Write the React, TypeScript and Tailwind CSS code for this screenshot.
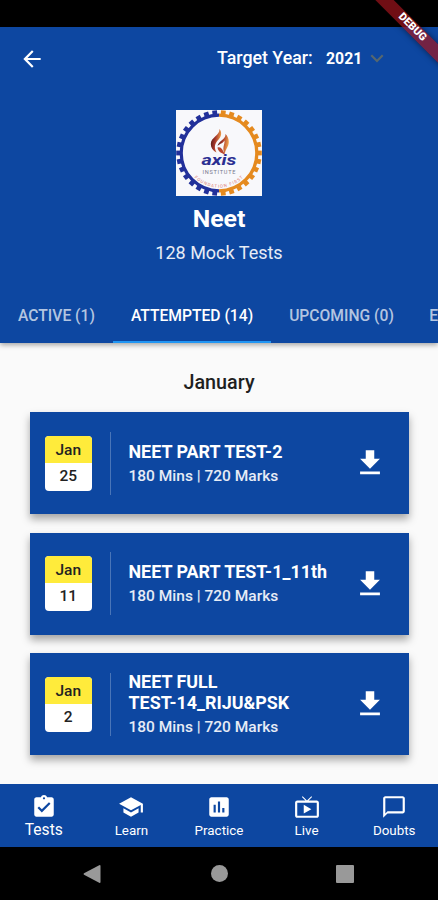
import clsx from "clsx";

interface MockTest {
  month: string;
  day: string;
  title: string[];
  mins: number;
  marks: number;
}

const tests: MockTest[] = [
  { month: "Jan", day: "25", title: ["NEET PART TEST-2"], mins: 180, marks: 720 },
  { month: "Jan", day: "11", title: ["NEET PART TEST-1_11th"], mins: 180, marks: 720 },
  { month: "Jan", day: "2", title: ["NEET FULL", "TEST-14_RIJU&PSK"], mins: 180, marks: 720 },
];

const tabs = [
  { label: "ACTIVE (1)", width: "w-[113px]", active: false },
  { label: "ATTEMPTED (14)", width: "w-[158px]", active: true },
  { label: "UPCOMING (0)", width: "w-[141px]", active: false },
  { label: "EXPIRED (0)", width: "w-[120px]", active: false },
];

const navItems = [
  {
    label: "Tests",
    active: true,
    d: "M19 3h-4.18C14.4 1.84 13.3 1 12 1c-1.3 0-2.4.84-2.82 2H5c-1.1 0-2 .9-2 2v14c0 1.1.9 2 2 2h14c1.1 0 2-.9 2-2V5c0-1.1-.9-2-2-2zm-7 0c.55 0 1 .45 1 1s-.45 1-1 1-1-.45-1-1 .45-1 1-1zm-2 14l-4-4 1.41-1.41L10 14.17l6.59-6.59L18 9l-8 8z",
  },
  {
    label: "Learn",
    active: false,
    d: "M5 13.18v4L12 21l7-3.82v-4L12 17l-7-3.82zM12 3L1 9l11 6 9-4.91V17h2V9L12 3z",
  },
  {
    label: "Practice",
    active: false,
    d: "M19 3H5c-1.1 0-2 .9-2 2v14c0 1.1.9 2 2 2h14c1.1 0 2-.9 2-2V5c0-1.1-.9-2-2-2zM9 17H7v-7h2v7zm4 0h-2V7h2v10zm4 0h-2v-4h2v4z",
  },
  {
    label: "Live",
    active: false,
    d: "M21 6h-7.59l3.29-3.29L16 2l-4 4-4-4-.71.71L10.59 6H3c-1.1 0-2 .89-2 2v12c0 1.1.9 2 2 2h18c1.1 0 2-.9 2-2V8c0-1.11-.9-2-2-2zm0 14H3V8h18v12zM9 10v8l7-4z",
  },
  {
    label: "Doubts",
    active: false,
    d: "M20 2H4c-1.1 0-2 .9-2 2v18l4-4h14c1.1 0 2-.9 2-2V4c0-1.1-.9-2-2-2zm0 14H6l-2 2V4h16v12z",
  },
];

function Icon({ d, className }: { d: string; className?: string }) {
  return (
    <svg viewBox="0 0 24 24" fill="currentColor" className={className}>
      <path d={d} />
    </svg>
  );
}

function AxisLogo() {
  const teeth = Array.from({ length: 30 }, (_, i) => i * 12 + 6);

  return (
    <svg viewBox="0 0 86 86" className="h-[86px] w-[86px]">
      <defs>
        <linearGradient id="flame" x1="0" x2="1" y1="0" y2="0.3">
          <stop offset="0" stopColor="#3b1512" />
          <stop offset="0.5" stopColor="#a3342a" />
          <stop offset="1" stopColor="#f0a04b" />
        </linearGradient>
        <path id="motto" d="M17 66 A34.8 34.8 0 0 0 69 66" />
      </defs>
      <rect width="86" height="86" fill="#f8f8fb" />
      {teeth.map((angle) => (
        <rect
          key={angle}
          x="40.6"
          y="0.2"
          width="4.8"
          height="6"
          fill={angle < 180 ? "#e58a1f" : "#22309a"}
          transform={`rotate(${angle} 43 43)`}
        />
      ))}
      <path d="M43 5.2 A37.8 37.8 0 0 0 43 80.8" fill="none" stroke="#22309a" strokeWidth="3.2" />
      <path d="M43 5.2 A37.8 37.8 0 0 1 43 80.8" fill="none" stroke="#e58a1f" strokeWidth="3.2" />
      <path d="M43.5 19 C44 25.5 35 27 34.8 34 C34.8 38 37 40.5 40.5 42.5 C37 35.5 40 32.5 43 29 C45.6 26 46 22 43.5 19z" fill="url(#flame)" />
      <path d="M49.5 24 C50 29.5 42 31 41.5 36.5 C42 34.3 47 33.5 48.5 30.5 C49 34.5 45.5 38 49 44.5 C48.6 40 52.8 37 52.8 32 C52.8 28.5 51.5 26 49.5 24z" fill="url(#flame)" />
      <path d="M41.5 37.5 C45 36 46.5 39.5 49 44.5 C45 43 42 41.5 41.5 37.5z" fill="#b8452e" />
      <text x="25.5" y="55.3" fontSize="14" fontWeight="700" fontStyle="italic" textLength="35" lengthAdjust="spacingAndGlyphs" fill="#2b2f92" fontFamily="Roboto, sans-serif">
        axis
      </text>
      <text x="26.5" y="63.6" fontSize="5.6" textLength="33" fill="#77778c" fontFamily="Roboto, sans-serif">
        INSTITUTE
      </text>
      <text fontSize="4.4" fill="#dc7970" fontFamily="Roboto, sans-serif">
        <textPath href="#motto" textLength="54" startOffset="2">
          FOUNDATION FIRST
        </textPath>
      </text>
    </svg>
  );
}

function DebugBanner() {
  return (
    <div className="pointer-events-none absolute top-0 right-0 z-20 h-[70px] w-[70px] overflow-hidden">
      <div className="absolute top-[20.5px] left-[-16.5px] flex h-[13px] w-[120px] rotate-45 items-center justify-center bg-[#a0141c]/70 text-[10.8px] leading-none font-black text-white shadow-[0_0_6px_rgba(0,0,0,0.5)]">
        DEBUG
      </div>
    </div>
  );
}

function TestCard({ test }: { test: MockTest }) {
  return (
    <div className="flex h-[102px] items-center bg-[#0d47a1] pl-[15px] shadow-[0_5px_8px_rgba(0,0,0,0.34)]">
      <div className="h-[55px] w-[47.5px] shrink-0 overflow-hidden rounded-[4px] bg-white text-center text-[15.5px] font-medium text-[#222]">
        <div className="h-[27px] bg-[#ffeb3b] leading-[28px]">{test.month}</div>
        <div className="leading-[27px]">{test.day}</div>
      </div>
      <div className="ml-[18px] h-[63px] w-px shrink-0 bg-white/25" />
      <div className="ml-[17.5px] flex-1 pt-[2px] text-white">
        <div className="text-[17.9px] leading-[21px] font-bold whitespace-nowrap">
          {test.title.map((line) => (
            <div key={line}>{line}</div>
          ))}
        </div>
        <div className="mt-[3px] text-[15.5px] leading-[23px] font-medium text-white/90">
          {test.mins} Mins | {test.marks} Marks
        </div>
      </div>
      <Icon d="M19 9h-4V3H9v6H5l7 7 7-7zM5 18v2h14v-2H5z" className="mr-[22px] h-[34px] w-[34px] shrink-0 text-white" />
    </div>
  );
}

export default function App() {
  return (
    <div className="relative flex h-[900px] w-[438px] flex-col overflow-hidden bg-[#fafafa] font-['Roboto',sans-serif]">
      <div className="h-[27px] shrink-0 bg-black" />

      <header className="z-10 flex h-[316px] shrink-0 flex-col bg-[#0d47a1] text-white shadow-[0_2px_5px_rgba(0,0,0,0.35)]">
        <div className="flex h-[63px] shrink-0 items-center pl-[19px]">
          <Icon d="M20 11H7.83l5.59-5.59L12 4l-8 8 8 8 1.41-1.41L7.83 13H20v-2z" className="h-[26px] w-[26px]" />
          <span className="ml-[172px] w-[109px] text-[17.8px] font-medium">Target Year:</span>
          <span className="w-[38px] text-[15.8px] font-bold">2021</span>
          <Icon d="M7.41 7.84L12 12.42l4.59-4.58L18 9.25l-6 6-6-6z" className="h-[26px] w-[26px] text-[#56676f]" />
        </div>
        <div className="mt-[20px] flex flex-col items-center">
          <AxisLogo />
          <h1 className="mt-[7px] text-[24.8px] leading-[32px] font-bold">Neet</h1>
          <p className="mt-[6px] text-[18px] leading-[24px] text-white/90">128 Mock Tests</p>
        </div>
        <div className="mt-auto flex h-[54px] w-[438px] overflow-hidden">
          {tabs.map((tab) => (
            <div
              key={tab.label}
              className={clsx(
                "flex shrink-0 items-center justify-center border-b-2 pt-[2px] text-[15.65px] font-medium",
                tab.width,
                tab.active ? "border-[#2196f3] text-white" : "border-transparent text-white/70"
              )}
            >
              {tab.label}
            </div>
          ))}
        </div>
      </header>

      <main className="flex flex-1 flex-col px-[29.5px]">
        <h2 className="mt-[28px] text-center text-[19.8px] leading-[24px] font-medium text-[#1f1f1f]">January</h2>
        <div className="mt-[17px] flex flex-col gap-[18.5px]">
          {tests.map((test) => (
            <TestCard key={test.title[0]} test={test} />
          ))}
        </div>
      </main>

      <nav className="grid h-[63px] shrink-0 grid-cols-5 bg-[#0d47a1] text-white">
        {navItems.map((item) => (
          <div key={item.label} className="flex flex-col items-center pt-[9.5px]">
            <Icon d={item.d} className="h-[26px] w-[26px]" />
            <span className={clsx("leading-[20px]", item.active ? "text-[15.6px]" : "pt-px text-[13.4px]")}>{item.label}</span>
          </div>
        ))}
      </nav>

      <div className="flex h-[53px] shrink-0 items-center bg-black pl-[83px] text-[#999]">
        <svg viewBox="0 0 18 20" fill="currentColor" className="h-[20px] w-[18px]">
          <path d="M16.2 1.2Q17.5 0.6 17.5 2v16q0 1.4-1.3.8L1 10.7Q0 10 1 9.3z" />
        </svg>
        <div className="ml-[110px] h-[17px] w-[17px] rounded-full bg-[#999]" />
        <div className="ml-[108px] h-[18px] w-[18px] rounded-[1px] bg-[#999]" />
      </div>

      <DebugBanner />
    </div>
  );
}
